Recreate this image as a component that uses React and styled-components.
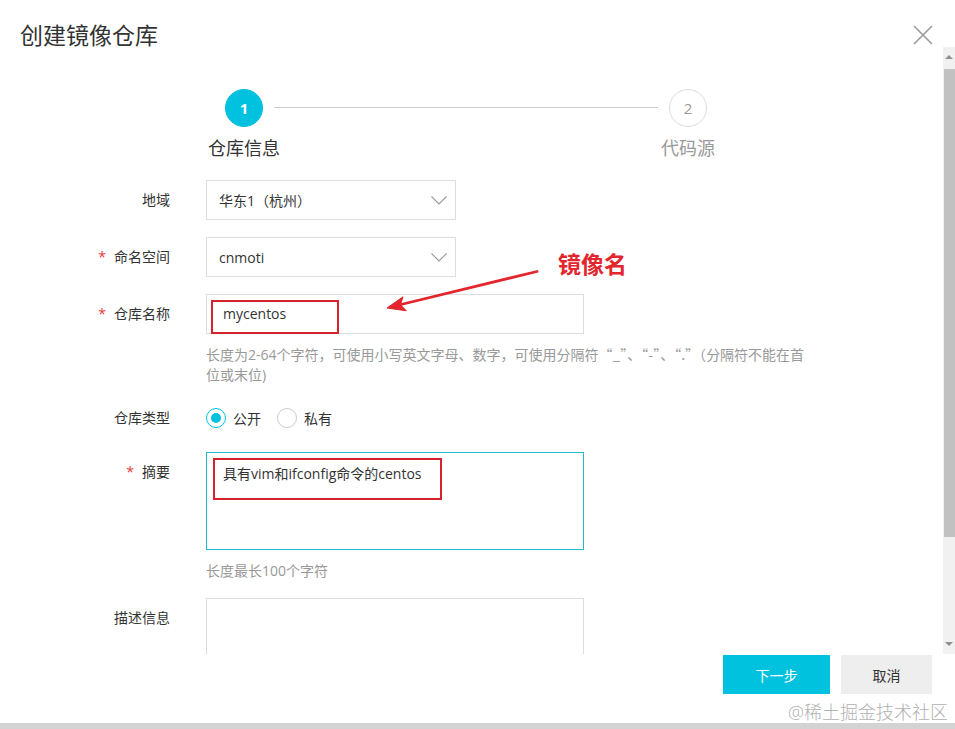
import styled, { createGlobalStyle } from "styled-components";

const GlobalStyle = createGlobalStyle`
  html, body {
    margin: 0;
    padding: 0;
    background: #ffffff;
  }
  body {
    font-family: "Open Sans", "Noto Sans CJK SC", sans-serif;
    color: #333333;
  }
  * {
    box-sizing: border-box;
  }
`;

function App() {
    return (
        <>
            <GlobalStyle />
            <Modal>
                <Header>
                    <Title>创建镜像仓库</Title>
                    <Close aria-label="关闭">
                        <svg width="20" height="20" viewBox="0 0 20 20">
                            <path d="M1 1 L19 19 M19 1 L1 19" stroke="#9a9a9a" strokeWidth="1.6" fill="none" />
                        </svg>
                    </Close>
                </Header>

                <Body>
                    <Content>
                        <Steps>
                            <StepItem>
                                <Circle $active>1</Circle>
                                <StepLabel $active>仓库信息</StepLabel>
                            </StepItem>
                            <StepLine />
                            <StepItem>
                                <Circle>2</Circle>
                                <StepLabel>代码源</StepLabel>
                            </StepItem>
                        </Steps>

                        <Form>
                            <Row>
                                <Label>地域</Label>
                                <Select>
                                    <span>华东1（杭州）</span>
                                    <Chevron />
                                </Select>
                            </Row>
                            <Row>
                                <Label><Required>*</Required>命名空间</Label>
                                <Select>
                                    <span>cnmoti</span>
                                    <Chevron />
                                </Select>
                            </Row>
                            <Row>
                                <Label><Required>*</Required>仓库名称</Label>
                                <Field>
                                    <Input>
                                        mycentos
                                        <Mark $left={4} $top={5} $w={128} $h={34} />
                                    </Input>
                                    <Help $lines={2}>
                                        长度为2-64个字符，可使用小写英文字母、数字，可使用分隔符<Cjk>“_”</Cjk>、<Cjk>“-”</Cjk>、<Cjk>“.”（</Cjk>分隔符不能在首
                                        <br />
                                        位或末位)
                                    </Help>
                                </Field>
                            </Row>
                            <Row>
                                <Label $lh={34}>仓库类型</Label>
                                <RadioGroup>
                                    <Radio $checked><Dot /></Radio>
                                    <RadioText>公开</RadioText>
                                    <Radio />
                                    <RadioText>私有</RadioText>
                                </RadioGroup>
                            </Row>
                            <Row>
                                <Label><Required>*</Required>摘要</Label>
                                <Field>
                                    <TextArea $focused>
                                        具有vim和ifconfig命令的centos
                                        <Mark $left={6} $top={5} $w={229} $h={42} />
                                    </TextArea>
                                    <Help $gap={11}>长度最长100个字符</Help>
                                </Field>
                            </Row>
                            <Row>
                                <Label>描述信息</Label>
                                <Field>
                                    <TextArea />
                                </Field>
                            </Row>
                        </Form>

                        <NoteText>镜像名</NoteText>
                        <NoteArrow width="170" height="64" viewBox="0 0 170 64">
                            <line x1="157" y1="14.5" x2="21" y2="47.5" stroke="#e3262d" strokeWidth="2.8" strokeLinecap="round" />
                            <path d="M7 51 L23 39.8 L20.5 47.7 L26.3 53.8 Z" fill="#e3262d" stroke="#e3262d" strokeWidth="1" strokeLinejoin="round" />
                        </NoteArrow>
                    </Content>

                    <ScrollBar>
                        <ScrollArrow><Triangle $up /></ScrollArrow>
                        <Track>
                            <Thumb />
                        </Track>
                        <ScrollArrow><Triangle /></ScrollArrow>
                    </ScrollBar>
                </Body>

                <Footer>
                    <Button $primary $w={107}>下一步</Button>
                    <Button $w={91}>取消</Button>
                </Footer>
                <BottomBar />
                <Watermark>@稀土掘金技术社区</Watermark>
            </Modal>
        </>
    );
}

function Chevron() {
    return (
        <svg width="16" height="9" viewBox="0 0 16 9">
            <polyline points="0.5,0.5 8,8 15.5,0.5" fill="none" stroke="#9a9a9a" strokeWidth="1.1" />
        </svg>
    );
}

export default App;

const Modal = styled.div`
    position: relative;
    width: 955px;
    height: 729px;
    display: flex;
    flex-direction: column;
    overflow: hidden;
    background: #ffffff;
`

const Header = styled.div`
    height: 47px;
    flex-shrink: 0;
    display: flex;
    justify-content: space-between;
    align-items: flex-start;
    padding: 20px 22px 0 20px;
`

const Title = styled.h1`
    margin: 0;
    font-size: 23px;
    line-height: 30px;
    font-weight: 400;
    color: #333333;
`

const Close = styled.div`
    width: 20px;
    height: 20px;
    margin-top: 5px;
    display: flex;
`

const Body = styled.div`
    height: 607px;
    flex-shrink: 0;
    display: flex;
`

const Content = styled.div`
    position: relative;
    flex: 1;
    overflow: hidden;
    padding: 42px 0 0 20px;
`

const Steps = styled.div`
    display: flex;
    align-items: flex-start;
    margin-left: 205px;
`

const StepItem = styled.div`
    width: 38px;
    display: flex;
    flex-direction: column;
    align-items: center;
`

const Circle = styled.div`
    width: 38px;
    height: 38px;
    border-radius: 50%;
    display: flex;
    align-items: center;
    justify-content: center;
    font-size: 15px;
    font-weight: ${props => props.$active ? 700 : 400};
    color: ${props => props.$active ? "#ffffff" : "#999999"};
    background: ${props => props.$active ? "#00c1de" : "#ffffff"};
    border: 1px solid ${props => props.$active ? "#00c1de" : "#dddddd"};
`

const StepLabel = styled.div`
    margin-top: 10px;
    height: 22px;
    font-size: 18px;
    line-height: 22px;
    white-space: nowrap;
    color: ${props => props.$active ? "#333333" : "#999999"};
`

const StepLine = styled.div`
    width: 384px;
    height: 1px;
    margin: 18px 11px 0 11px;
    background: #cccccc;
`

const Form = styled.div`
    margin-top: 21px;
`

const Row = styled.div`
    display: flex;
    margin-bottom: 17px;
`

const Label = styled.div`
    width: 150px;
    flex-shrink: 0;
    margin-right: 36px;
    text-align: right;
    font-size: 14px;
    line-height: ${props => props.$lh || 40}px;
    color: #333333;
`

const Required = styled.span`
    color: #e4393c;
    margin-right: 8px;
`

const Field = styled.div`
    display: flex;
    flex-direction: column;
`

const Select = styled.div`
    width: 250px;
    height: 40px;
    border: 1px solid #dddddd;
    display: flex;
    align-items: center;
    justify-content: space-between;
    padding: 0 8px 0 12px;
    font-size: 14px;
    color: #333333;
`

const Input = styled.div`
    position: relative;
    width: 378px;
    height: 40px;
    border: 1px solid #dddddd;
    padding: 0 16px;
    font-size: 14px;
    line-height: 38px;
    color: #333333;
`

const TextArea = styled.div`
    position: relative;
    width: 378px;
    height: 98px;
    border: 1px solid ${props => props.$focused ? "#1fb8cf" : "#dddddd"};
    padding: 11px 16px;
    font-size: 14px;
    line-height: 20px;
    color: #333333;
`

const Mark = styled.div`
    position: absolute;
    left: ${props => props.$left}px;
    top: ${props => props.$top}px;
    width: ${props => props.$w}px;
    height: ${props => props.$h}px;
    border: 2px solid #d5222c;
`

const Help = styled.div`
    margin-top: ${props => props.$gap || 10}px;
    height: ${props => (props.$lines || 1) * 20}px;
    font-size: 14px;
    line-height: 20px;
    color: #999999;
    white-space: nowrap;
`

const Cjk = styled.span`
    font-family: "Noto Sans CJK SC", sans-serif;
`

const RadioGroup = styled.div`
    display: flex;
    align-items: center;
    height: 34px;
`

const Radio = styled.div`
    width: 20px;
    height: 20px;
    border-radius: 50%;
    border: 1px solid ${props => props.$checked ? "#00c1de" : "#cccccc"};
    display: flex;
    align-items: center;
    justify-content: center;
`

const Dot = styled.div`
    width: 10px;
    height: 10px;
    border-radius: 50%;
    background: #00c1de;
`

const RadioText = styled.span`
    margin: 0 16px 0 7px;
    font-size: 14px;
    color: #333333;
`

const NoteText = styled.div`
    position: absolute;
    left: 558px;
    top: 205px;
    font-size: 23px;
    line-height: 24px;
    font-weight: 700;
    color: #e3262d;
`

const NoteArrow = styled.svg`
    position: absolute;
    left: 380px;
    top: 210px;
`

const ScrollBar = styled.div`
    width: 12px;
    flex-shrink: 0;
    display: flex;
    flex-direction: column;
    background: #f1f1f1;
`

const ScrollArrow = styled.div`
    height: 20px;
    display: flex;
    align-items: center;
    justify-content: center;
`

const Triangle = styled.div`
    width: 0;
    height: 0;
    border-left: 4px solid transparent;
    border-right: 4px solid transparent;
    border-top: ${props => props.$up ? "none" : "4px solid #8f8f8f"};
    border-bottom: ${props => props.$up ? "4px solid #8f8f8f" : "none"};
`

const Track = styled.div`
    flex: 1;
`

const Thumb = styled.div`
    height: 468px;
    margin: 2px 0 0 1px;
    background: #c1c1c1;
`

const Footer = styled.div`
    height: 69px;
    flex-shrink: 0;
    display: flex;
    justify-content: flex-end;
    align-items: flex-start;
    gap: 11px;
    padding: 1px 23px 0 0;
`

const Button = styled.button`
    width: ${props => props.$w}px;
    height: 39px;
    border: none;
    padding: 0;
    font-family: "Open Sans", "Noto Sans CJK SC", sans-serif;
    font-size: 14px;
    color: ${props => props.$primary ? "#ffffff" : "#333333"};
    background: ${props => props.$primary ? "#00c1de" : "#eeeeee"};
`

const BottomBar = styled.div`
    height: 6px;
    flex-shrink: 0;
    background: #d3d3d3;
`

const Watermark = styled.div`
    position: absolute;
    right: 7px;
    bottom: 6px;
    font-size: 18px;
    line-height: 22px;
    color: #b0b0b0;
    font-weight: 300;
`
